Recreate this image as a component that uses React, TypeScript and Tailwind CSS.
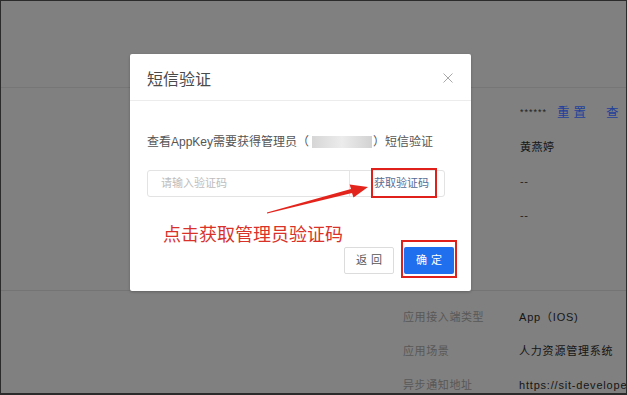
const font = "font-['Liberation_Sans','Noto_Sans_CJK_SC',sans-serif]"

export default function App() {
  const topRows = [
    { key: "secret", content: (
      <div className="flex items-center">
        <span className="text-[9px] tracking-[1px] text-[#222]">******</span>
        <span className="ml-[10px] text-[12.5px] tracking-[4px] text-[#23409a]">重置</span>
        <span className="ml-[16px] text-[12.5px] text-[#23409a]">查</span>
      </div>
    ) },
    { key: "name", content: <span className="text-[#161616]">黄燕婷</span> },
    { key: "a", content: <span className="text-[#222]">--</span> },
    { key: "b", content: <span className="text-[#222]">--</span> },
  ]

  const bottomRows = [
    { label: "应用接入端类型", value: "App（IOS)" },
    { label: "应用场景", value: "人力资源管理系统" },
    { label: "异步通知地址", value: "https://sit-develope" },
  ]

  return (
    <div className={`relative w-[627px] h-[395px] overflow-hidden bg-[#808080] border border-b-2 border-[#2b2b2b] ${font}`}>
      {/* page behind the overlay */}
      <div className="h-[87px] border-b border-[#767676]" />
      <div className="h-[203px] border-b border-[#747474] pl-[519px] pt-[8px] text-[11px] tracking-[0.5px]">
        {topRows.map((r) => (
          <div key={r.key} className="h-[34px] flex items-center">{r.content}</div>
        ))}
      </div>
      <div className="pt-[9px] text-[11px] tracking-[0.6px]">
        {bottomRows.map((r) => (
          <div key={r.label} className="h-[34px] flex items-center whitespace-nowrap">
            <span className="ml-[402px] w-[116px] shrink-0 text-[#585858]">{r.label}</span>
            <span className="text-[#151515] tracking-[0.8px]">{r.value}</span>
          </div>
        ))}
      </div>

      {/* dialog */}
      <div className="absolute left-[129px] top-[53px] w-[341px] h-[237px] bg-white rounded-[2px] shadow-[0_1px_3px_rgba(0,0,0,0.25)]">
        <div className="h-[47px] border-b border-[#ececec] flex items-center justify-between pl-[17px] pr-[18px]">
          <span className="mt-[6px] text-[16px] leading-none text-[#4a4a4a]">短信验证</span>
          <svg width="10" height="10" viewBox="0 0 10 10" className="mt-[1px]">
            <path d="M0.5 0.5 L9.5 9.5 M9.5 0.5 L0.5 9.5" stroke="#a8a8a8" strokeWidth="1" />
          </svg>
        </div>

        <div className="px-[17px] pt-[31px]">
          <div className="flex items-center h-[20px] text-[12px] text-[#555] whitespace-nowrap">
            <span>查看AppKey需要获得管理员（</span>
            <span className="ml-[3px] w-[60px] h-[12px] bg-gradient-to-r from-[#d6d6d6] via-[#ececec] to-[#d2d2d2]" />
            <span className="ml-[1px]">）短信验证</span>
          </div>

          <div className="mt-[18px] w-[298px] h-[27px] border border-[#e3e3e3] rounded-[3px] flex">
            <div className="flex-1 flex items-center pl-[13px] text-[11px] text-[#bdbdbd]">请输入验证码</div>
            <div className="relative w-[95px] border-l border-[#e6e6e6] flex items-center justify-center text-[11px] text-[#566c96]">
              <span className="ml-[9px]">获取验证码</span>
              <span className="absolute left-[21px] -top-[3px] w-[66px] h-[30px] border-2 border-[#e0211b]" />
            </div>
          </div>

          <div className="mt-[28px] ml-[16px] h-[20px] leading-[20px] text-[18px] text-[#d9322a]">
            点击获取管理员验证码
          </div>

          <div className="mt-[2px] flex justify-end gap-[10px]">
            <button className="w-[50px] h-[27px] border border-[#dcdcdc] rounded-[2px] bg-white text-[11px] tracking-[4px] pl-[4px] text-[#555]">
              返回
            </button>
            <div className="relative">
              <button className="w-[50px] h-[27px] rounded-[2px] bg-[#1f6fee] text-[11px] tracking-[4px] pl-[4px] text-white">
                确定
              </button>
              <span className="absolute -left-[3px] -right-[3px] -top-[7px] -bottom-[4px] border-2 border-[#e0211b]" />
            </div>
          </div>
        </div>

        {/* annotation arrow */}
        <svg className="absolute left-0 top-0 pointer-events-none" width="341" height="237" viewBox="0 0 341 237">
          <polygon
            points="137.1,159.6 222,138.9 223.5,143.5 238,133 219.6,130.6 221,135.1 136.9,158.4"
            fill="#e3241c"
          />
        </svg>
      </div>
    </div>
  )
}
